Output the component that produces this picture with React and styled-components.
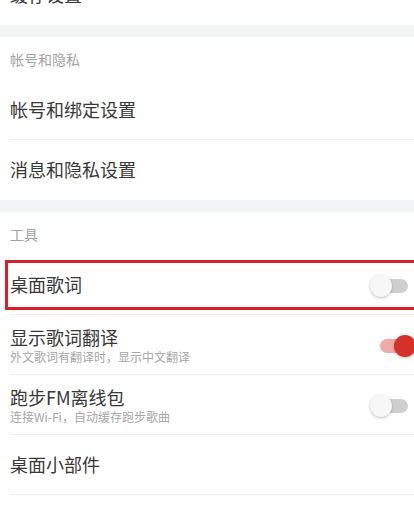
import React from "react";
import styled, { createGlobalStyle } from "styled-components";

const Global = createGlobalStyle`
  html, body { margin: 0; padding: 0; background: #ffffff; overflow: hidden; }
  body { font-family: "Noto Sans CJK SC", "Noto Sans", sans-serif; }
`;

const Page = styled.div`
  width: 414px;
  height: 509px;
  overflow: hidden;
  background: #ffffff;
  display: flex;
  flex-direction: column;
`;

const Gap = styled.div`
  height: 12px;
  background: #f2f3f5;
  flex-shrink: 0;
`;

const Section = styled.div`
  display: flex;
  flex-direction: column;
  margin-top: ${(p) => p.$offset || 0}px;
`;

const Header = styled.div`
  height: 43px;
  padding-left: 10px;
  display: flex;
  align-items: center;
  font-size: 14px;
  color: #a3a3a3;
  line-height: 1;
`;

const Row = styled.div`
  position: relative;
  padding-left: 10px;
  flex-shrink: 0;
`;

const RowInner = styled.div`
  height: 59px;
  display: flex;
  align-items: center;
  justify-content: space-between;
  padding-right: 6px;
  border-bottom: 1px solid ${(p) => (p.$divider ? "#f0f0f0" : "transparent")};
`;

const Texts = styled.div`
  display: flex;
  flex-direction: column;
  gap: 3px;
  padding-top: ${(p) => (p.$two ? "3px" : "0")};
`;

const Title = styled.div`
  font-size: 18px;
  color: #383838;
  line-height: 19px;
`;

const Sub = styled.div`
  font-size: 12px;
  color: #a6a6a6;
  line-height: 14px;
`;

const Track = styled.div`
  position: relative;
  width: 28px;
  height: 14px;
  border-radius: 7px;
  background: ${(p) => (p.$on ? "#f2aaa7" : "#cfcfcf")};
  margin-top: 2px;
`;

const Knob = styled.div`
  position: absolute;
  top: -4px;
  left: ${(p) => (p.$on ? "14px" : "-10px")};
  width: 22px;
  height: 22px;
  border-radius: 50%;
  background: ${(p) => (p.$on ? "#d6302a" : "#f7f7f7")};
  box-shadow: 0 1px 3px rgba(0, 0, 0, 0.26);
`;

const Highlight = styled.div`
  position: absolute;
  left: 5px;
  top: 5px;
  right: 0;
  height: 50px;
  box-sizing: border-box;
  border: 3px solid #d81f2b;
  border-right: none;
  pointer-events: none;
`;

function Toggle({ on }) {
  return (
    <Track $on={on}>
      <Knob $on={on} />
    </Track>
  );
}

function Item({ title, sub, toggle, divider = true, highlight }) {
  return (
    <Row>
      <RowInner $divider={divider}>
        <Texts $two={!!sub}>
          <Title>{title}</Title>
          {sub && <Sub>{sub}</Sub>}
        </Texts>
        {toggle !== undefined && <Toggle on={toggle} />}
      </RowInner>
      {highlight && <Highlight />}
    </Row>
  );
}

export default function App() {
  return (
    <Page>
      <Global />
      <Section $offset={-35}>
        <Item title="缓存设置" divider={false} />
      </Section>
      <Gap />
      <Section>
        <Header>帐号和隐私</Header>
        <Item title="帐号和绑定设置" />
        <Item title="消息和隐私设置" divider={false} />
      </Section>
      <Gap />
      <Section>
        <Header>工具</Header>
        <Item title="桌面歌词" toggle={false} highlight />
        <Item title="显示歌词翻译" sub="外文歌词有翻译时，显示中文翻译" toggle={true} />
        <Item title="跑步FM离线包" sub="连接Wi-Fi，自动缓存跑步歌曲" toggle={false} />
        <Item title="桌面小部件" />
      </Section>
    </Page>
  );
}
